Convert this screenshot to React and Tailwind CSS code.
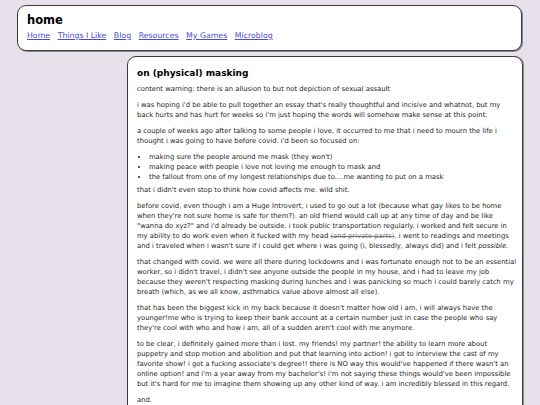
import React from "react";

function Lines({ lines, className = "" }) {
  return (
    <p className={"whitespace-nowrap mb-[6px] " + className}>
      {lines.map((l, i) => (
        <React.Fragment key={i}>
          {l}
          {i < lines.length - 1 && <br />}
        </React.Fragment>
      ))}
    </p>
  );
}

export default function App() {
  const links = ["Home", "Things I Like", "Blog", "Resources", "My Games", "Microblog"];
  return (
    <div className="h-[405px] w-[540px] overflow-hidden bg-[#e7e1ec] pt-[5px] font-['DejaVu_Sans',sans-serif]">
      <header className="ml-[17px] w-[505px] h-[46px] rounded-[9px] border border-[#3c3c3c] bg-white shadow-[1px_1px_0_0_#8a8a8a] pl-[9px] pt-[7px]">
        <h1 className="text-[11.5px] leading-[14px] font-bold text-black">home</h1>
        <nav className="mt-[4px] flex gap-[7.6px] text-[7.8px] leading-[10px]">
          {links.map((l) => (
            <a key={l} href="#" className="text-[#4b4bd4] underline underline-offset-[1px]">
              {l}
            </a>
          ))}
        </nav>
      </header>

      <main className="ml-[127px] mt-[5px] w-[396px] h-[400px] rounded-t-[9px] border border-[#3c3c3c] bg-white shadow-[1px_0_0_0_#8a8a8a] pl-[9px] pt-[10px] text-[6.8px] leading-[10px] text-[#262626]">
        <h2 className="text-[9px] leading-[12px] font-bold text-black mb-[5px]">on (physical) masking</h2>
        <Lines lines={["content warning: there is an allusion to but not depiction of sexual assault"]} />
        <Lines
          lines={[
            "i was hoping i'd be able to pull together an essay that's really thoughtful and incisive and whatnot, but my",
            "back hurts and has hurt for weeks so i'm just hoping the words will somehow make sense at this point.",
          ]}
        />
        <Lines
          lines={[
            "a couple of weeks ago after talking to some people i love, it occurred to me that i need to mourn the life i",
            "thought i was going to have before covid. i'd been so focused on:",
          ]}
        />
        <ul className="list-disc pl-[12px] mb-[3px] whitespace-nowrap marker:text-[6px]">
          <li>making sure the people around me mask (they won't)</li>
          <li>making peace with people i love not loving me enough to mask and</li>
          <li>the fallout from one of my longest relationships due to....me wanting to put on a mask</li>
        </ul>
        <Lines lines={["that i didn't even stop to think how covid affects me. wild shit."]} />
        <Lines
          lines={[
            "before covid, even though i am a Huge Introvert, i used to go out a lot (because what gay likes to be home",
            "when they're not sure home is safe for them?). an old friend would call up at any time of day and be like",
            "\"wanna do xyz?\" and i'd already be outside. i took public transportation regularly. i worked and felt secure in",
            <>
              my ability to do work even when it fucked with my head{" "}
              <s className="text-[#777]">(and private parts)</s>. i went to readings and meetings
            </>,
            <>
              and i traveled when i wasn't sure if i could get where i was going (i, blessedly, always did) and i felt{" "}
              <i>possible</i>.
            </>,
          ]}
        />
        <Lines
          lines={[
            "that changed with covid. we were all there during lockdowns and i was fortunate enough not to be an essential",
            "worker, so i didn't travel, i didn't see anyone outside the people in my house, and i had to leave my job",
            "because they weren't respecting masking during lunches and i was panicking so much i could barely catch my",
            "breath (which, as we all know, asthmatics value above almost all else).",
          ]}
        />
        <Lines
          lines={[
            "that has been the biggest kick in my back because it doesn't matter how old i am, i will always have the",
            "younger!me who is trying to keep their bank account at a certain number just in case the people who say",
            "they're cool with who and how i am, all of a sudden aren't cool with me anymore.",
          ]}
        />
        <Lines
          lines={[
            "to be clear, i definitely gained more than i lost. my friends! my partner! the ability to learn more about",
            "puppetry and stop motion and abolition and put that learning into action! i got to interview the cast of my",
            "favorite show! i got a fucking associate's degree!! there is NO way this would've happened if there wasn't an",
            "online option! and i'm a year away from my bachelor's! i'm not saying these things would've been impossible",
            "but it's hard for me to imagine them showing up any other kind of way. i am incredibly blessed in this regard.",
          ]}
        />
        <Lines lines={["and."]} />
      </main>
    </div>
  );
}
